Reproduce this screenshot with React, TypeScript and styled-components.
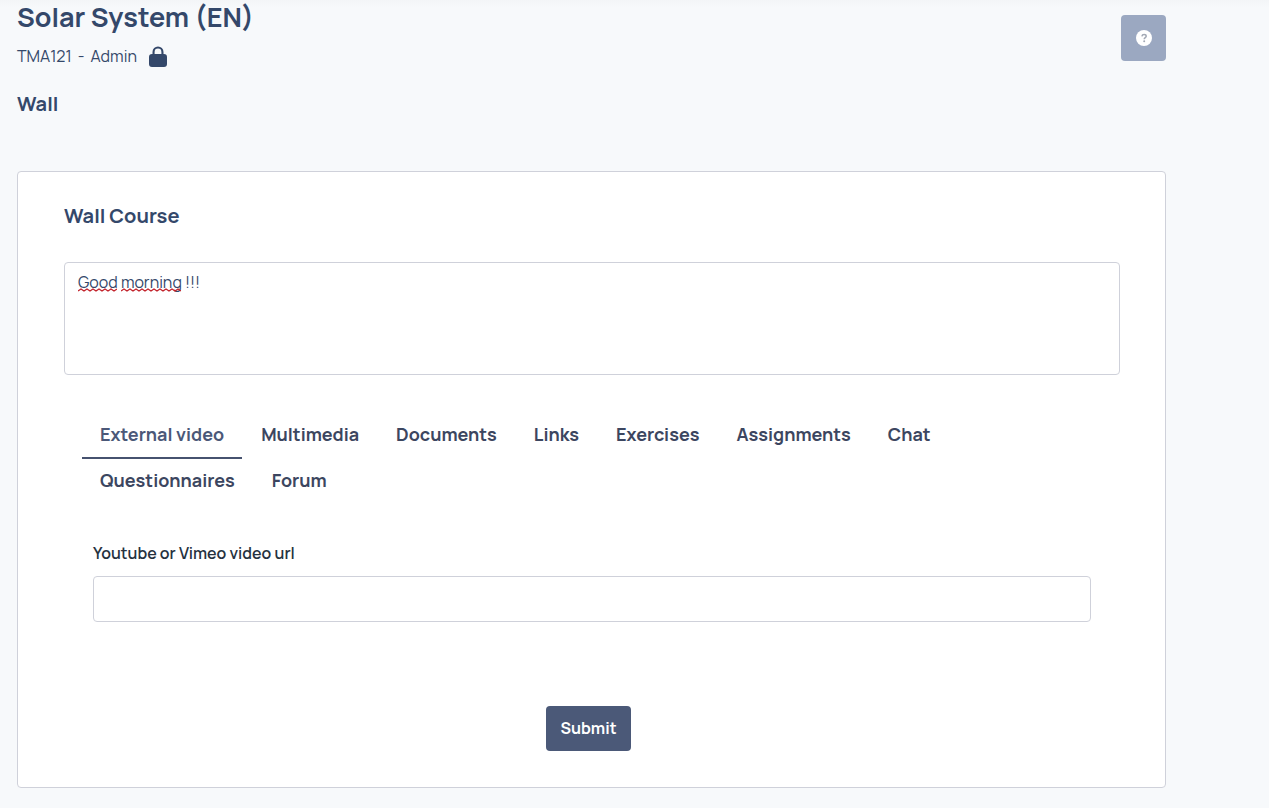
import React, { useState } from "react";
import styled, { createGlobalStyle } from "styled-components";

const GlobalStyle = createGlobalStyle`
  *, *::before, *::after { box-sizing: border-box; }
  body {
    margin: 0;
    background: #f7f9fb;
    color: #34486a;
    font-family: Manrope, Inter, "Liberation Sans", sans-serif;
    font-size: 16px;
    line-height: 24px;
  }
  button, input, textarea { font: inherit; color: inherit; }
`;

const Page = styled.main`
  padding: 0 103px 20px 17px;
  background: linear-gradient(#f3f5f7, #f7f9fb 8px);
`;

const Header = styled.header`
  display: flex;
  justify-content: space-between;
  align-items: flex-start;
`;

const CourseTitle = styled.h1`
  margin: 0;
  font-size: 27px;
  line-height: 34px;
  font-weight: 700;
`;

const CourseMeta = styled.div`
  display: flex;
  align-items: center;
  gap: 6px;
  margin-top: 10px;
  font-weight: 400;
`;

const LockIcon = styled.svg`
  width: 18px;
  height: 21px;
  margin-left: 6px;
  fill: #34486a;
`;

const HelpButton = styled.button`
  display: flex;
  align-items: center;
  justify-content: center;
  width: 45px;
  height: 46px;
  margin-top: 15px;
  padding: 0;
  border: 0;
  border-radius: 4px;
  background: #9ba8c1;
  cursor: pointer;
`;

const SectionTitle = styled.h2`
  margin: 0;
  font-size: 20px;
  line-height: 26px;
  font-weight: 700;
`;

const PageSection = styled.section`
  margin-top: 23px;
`;

const Card = styled.form`
  margin-top: 54px;
  padding: 31px 45px 36px 46px;
  border: 1px solid #cfd1da;
  border-radius: 4px;
  background: #fff;
`;

const Message = styled.div`
  position: relative;
  margin-top: 33px;
`;

const MessageBox = styled.textarea`
  display: block;
  width: 100%;
  height: 113px;
  padding: 7px 13px;
  border: 1px solid #cfd1da;
  border-radius: 4px;
  background: #fff;
  font-weight: 400;
  outline: none;
  resize: none;
`;

const SpellingMarks = styled.div`
  position: absolute;
  top: 26px;
  left: 14px;
  display: flex;
  gap: 4px;
  pointer-events: none;
`;

const Tabs = styled.div`
  display: flex;
  flex-wrap: wrap;
  column-gap: 1px;
  margin: 38px 18px 0;
`;

const Tab = styled.button<{ $active: boolean }>`
  height: 46px;
  padding: 0 18px 2px;
  border: 0;
  border-bottom: 2px solid ${(p) => (p.$active ? "#46526f" : "transparent")};
  background: none;
  color: ${(p) => (p.$active ? "#4b5878" : "#3c4660")};
  font-size: 18px;
  font-weight: 700;
  cursor: pointer;
`;

const Field = styled.div`
  display: flex;
  flex-direction: column;
  gap: 11px;
  margin: 36px 29px 0;
`;

const FieldLabel = styled.label`
  color: #26323f;
  font-weight: 600;
`;

const TextInput = styled.input`
  width: 100%;
  height: 46px;
  padding: 0 13px;
  border: 1px solid #cfd1da;
  border-radius: 4px;
  background: #fff;
  outline: none;
`;

const Actions = styled.div`
  display: flex;
  justify-content: center;
  margin-top: 84px;
  padding-right: 7px;
`;

const SubmitButton = styled.button`
  min-width: 85px;
  height: 45px;
  padding: 0 14px 2px;
  border: 0;
  border-radius: 4px;
  background: #4b5978;
  color: #fff;
  font-weight: 700;
  cursor: pointer;
`;

const TAB_NAMES = [
  "External video",
  "Multimedia",
  "Documents",
  "Links",
  "Exercises",
  "Assignments",
  "Chat",
  "Questionnaires",
  "Forum",
];

function Squiggle({ width }: { width: number }) {
  let d = "M0 3";
  for (let x = 3; x <= width; x += 3) d += ` L${x} ${x % 2 ? 1 : 3}`;
  return (
    <svg width={width} height={4} aria-hidden="true">
      <path d={d} fill="none" stroke="#c2222b" strokeWidth="1.3" />
    </svg>
  );
}

export default function App() {
  const [active, setActive] = useState(TAB_NAMES[0]);
  const [message, setMessage] = useState("Good morning !!!");

  return (
    <Page>
      <GlobalStyle />
      <Header>
        <div>
          <CourseTitle>Solar System (EN)</CourseTitle>
          <CourseMeta>
            <span>TMA121</span>
            <span>-</span>
            <span>Admin</span>
            <LockIcon viewBox="0 0 18 21" aria-hidden="true">
              <path
                fillRule="evenodd"
                d="M3.5 8V6a5.5 5.5 0 0 1 11 0v2H15a3 3 0 0 1 3 3v7a3 3 0 0 1-3 3H3a3 3 0 0 1-3-3v-7a3 3 0 0 1 3-3ZM5.6 8h6.8V6a3.4 3.4 0 0 0-6.8 0Z"
              />
            </LockIcon>
          </CourseMeta>
        </div>
        <HelpButton type="button" aria-label="Help">
          <svg width="16" height="16" viewBox="0 0 16 16" aria-hidden="true">
            <circle cx="8" cy="8" r="8" fill="#fff" />
            <path
              d="M5.9 6.3C6.1 5 7 4.6 8.1 4.6c1.2 0 2.1.6 2.1 1.7C10.2 7.6 8.2 7.7 8.2 9.2"
              fill="none"
              stroke="#a3a9b5"
              strokeWidth="1.5"
            />
            <circle cx="8.2" cy="11.2" r="1" fill="#a3a9b5" />
          </svg>
        </HelpButton>
      </Header>

      <PageSection>
        <SectionTitle>Wall</SectionTitle>
        <Card onSubmit={(e) => e.preventDefault()}>
          <SectionTitle as="h3">Wall Course</SectionTitle>
          <Message>
            <MessageBox
              aria-label="Wall Course"
              spellCheck={false}
              value={message}
              onChange={(e) => setMessage(e.target.value)}
            />
            {message.startsWith("Good morning") && (
              <SpellingMarks>
                <Squiggle width={39} />
                <Squiggle width={60} />
              </SpellingMarks>
            )}
          </Message>

          <Tabs role="tablist">
            {TAB_NAMES.map((name) => (
              <Tab
                key={name}
                type="button"
                role="tab"
                aria-selected={name === active}
                $active={name === active}
                onClick={() => setActive(name)}
              >
                {name}
              </Tab>
            ))}
          </Tabs>

          <Field>
            <FieldLabel htmlFor="video-url">Youtube or Vimeo video url</FieldLabel>
            <TextInput id="video-url" type="text" />
          </Field>

          <Actions>
            <SubmitButton type="submit">Submit</SubmitButton>
          </Actions>
        </Card>
      </PageSection>
    </Page>
  );
}
